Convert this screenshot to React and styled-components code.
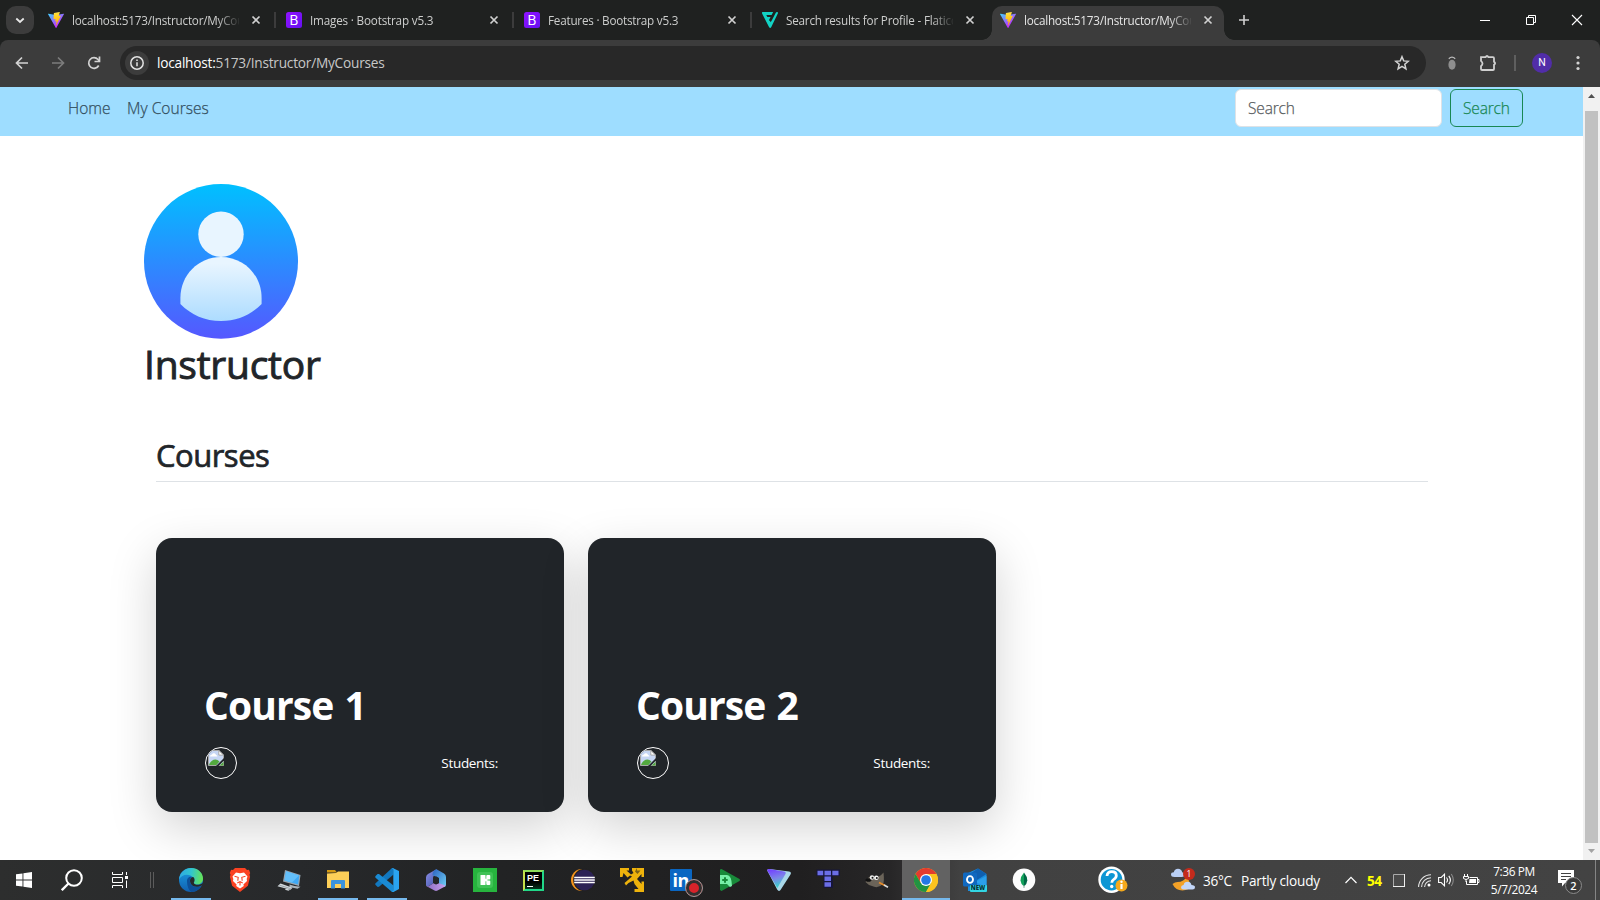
import React from "react";
import styled, { createGlobalStyle } from "styled-components";

const Global = createGlobalStyle`
  * { box-sizing: border-box; }
  body { margin: 0; overflow: hidden; background: #fff; }
  svg { display: block; flex: none; }
`;

const Screen = styled.div`
  width: 1600px;
  height: 900px;
  display: flex;
  flex-direction: column;
  overflow: hidden;
  font-family: "Open Sans", "Noto Sans", sans-serif;
`;

const Label = styled.span`
  font-size: ${(p) => p.$size}px;
  font-weight: ${(p) => p.$weight || 400};
  letter-spacing: ${(p) => p.$track || 0}px;
  color: ${(p) => p.$color || "inherit"};
  white-space: nowrap;
`;

/* ---------- browser chrome ---------- */

const TabStrip = styled.div`
  height: 40px;
  flex: none;
  display: flex;
  background: #1f2120;
`;

const TabSearch = styled.div`
  width: 28px;
  height: 28px;
  margin: 6px 6px 0;
  border-radius: 10px;
  background: #3c3c3c;
  display: flex;
  align-items: center;
  justify-content: center;
`;

const Tab = styled.div`
  position: relative;
  width: ${(p) => (p.$active ? 232 : 238)}px;
  height: 34px;
  margin-top: 6px;
  padding: 0 0 6px 8px;
  display: flex;
  align-items: center;
  color: ${(p) => (p.$active ? "#e6e6e6" : "#cdcecd")};
  background: ${(p) => (p.$active ? "#3c3c3c" : "transparent")};
  border-radius: 10px 10px 0 0;
  ${(p) =>
    p.$active &&
    `&::before, &::after {
      content: "";
      position: absolute;
      bottom: 0;
      width: 10px;
      height: 10px;
    }
    &::before { left: -10px; background: radial-gradient(circle at 0 0, transparent 9.5px, #3c3c3c 10px); }
    &::after { right: -10px; background: radial-gradient(circle at 100% 0, transparent 9.5px, #3c3c3c 10px); }`}
`;

const TabTitle = styled.div`
  width: 167px;
  margin: 0 9px 0 8px;
  overflow: hidden;
  font-size: 11.7px;
  line-height: 20px;
  letter-spacing: ${(p) => p.$track}px;
  white-space: nowrap;
  mask-image: linear-gradient(to right, #000 145px, transparent 169px);
`;

const TabDivider = styled.div`
  width: 2px;
  height: 16px;
  margin-left: 10px;
  background: #3c3c3c;
`;

const NewTab = styled.div`
  margin: 14px 0 0 14px;
`;

const WindowButtons = styled.div`
  margin-left: auto;
  height: 40px;
  display: flex;
  align-items: center;
`;

const WindowButton = styled.div`
  width: 46px;
  display: flex;
  justify-content: center;
`;

const ToolbarBack = styled.div`
  height: 47px;
  flex: none;
  background: #1f2120;
`;

const Toolbar = styled.div`
  height: 47px;
  padding: 0 14px 1px 14px;
  display: flex;
  align-items: center;
  background: #3c3c3c;
  border-radius: 8px 8px 0 0;
`;

const NavButtons = styled.div`
  width: 106px;
  display: flex;
  gap: 20px;
`;

const Omnibox = styled.div`
  width: 1306px;
  height: 34px;
  padding: 0 16px 0 5px;
  display: flex;
  align-items: center;
  border-radius: 17px;
  background: #282828;
`;

const SiteInfo = styled.div`
  width: 24px;
  height: 24px;
  margin-right: 8px;
  border-radius: 50%;
  background: #3c3c3c;
  display: flex;
  align-items: center;
  justify-content: center;
`;

const Url = styled.div`
  flex: 1;
  font-size: 13.7px;
  line-height: 20px;
  letter-spacing: -0.24px;
  color: #c7c7c7;
  b { font-weight: 400; color: #fff; }
`;

const ToolbarRight = styled.div`
  flex: 1;
  display: flex;
  align-items: center;
  justify-content: flex-end;
`;

const ToolbarDivider = styled.div`
  width: 2px;
  height: 16px;
  margin: 0 16px 0 17px;
  background: #5f5f5f;
`;

const Profile = styled.div`
  width: 20px;
  height: 20px;
  margin-right: 18px;
  border-radius: 50%;
  background: #512da8;
  color: #fff;
  font: 400 10.5px/20px Roboto, sans-serif;
  text-align: center;
`;

/* ---------- web page ---------- */

const Viewport = styled.div`
  height: 773px;
  flex: none;
  display: flex;
`;

const Page = styled.div`
  width: 1583px;
  overflow: hidden;
  background: #fff;
  color: #212529;
`;

const Navbar = styled.nav`
  height: 49px;
  padding: 2px 60px 0 68px;
  display: flex;
  align-items: flex-start;
  background: #9eddff;
`;

const NavLink = styled.a`
  width: ${(p) => p.$width}px;
  margin-right: 16px;
  font-size: 15.5px;
  font-weight: 300;
  letter-spacing: ${(p) => p.$track}px;
  line-height: 39px;
  color: #34505f;
  -webkit-text-stroke: 0.25px currentColor;
  white-space: nowrap;
`;

const SearchForm = styled.div`
  margin-left: auto;
  display: flex;
  gap: 8px;
`;

const Field = styled.div`
  width: ${(p) => (p.$button ? 73 : 207)}px;
  height: 38px;
  padding-left: 12px;
  border: 1px solid ${(p) => (p.$button ? "#198754" : "#dee2e6")};
  border-radius: 6px;
  background: ${(p) => (p.$button ? "transparent" : "#fff")};
  color: ${(p) => (p.$button ? "#198754" : "#595d61")};
  font-size: 15.5px;
  font-weight: 300;
  letter-spacing: -0.15px;
  line-height: 37px;
  -webkit-text-stroke: 0.25px currentColor;
`;

const Content = styled.main`
  padding: 48px 155px 0 144px;
`;

const Name = styled.h1`
  margin: 1px 0 0;
  height: 48px;
  font-size: 39px;
  font-weight: 400;
  line-height: 48px;
  letter-spacing: -0.25px;
  -webkit-text-stroke: 0.9px currentColor;
`;

const SectionTitle = styled.h2`
  margin: 42px 0 0 12px;
  height: 52px;
  border-bottom: 1px solid #dee2e6;
  font-size: 31px;
  font-weight: 400;
  line-height: 50px;
  letter-spacing: -0.5px;
  -webkit-text-stroke: 0.7px currentColor;
`;

const Cards = styled.div`
  margin: 56px 0 0 12px;
  display: flex;
  gap: 24px;
`;

const Card = styled.article`
  width: 408px;
  height: 274px;
  padding: 0 65px 33px 49px;
  display: flex;
  flex-direction: column;
  justify-content: flex-end;
  border-radius: 16px;
  background: #212529;
  box-shadow: 0 16px 48px rgba(0, 0, 0, 0.175);
  color: #fff;
`;

const CardTitle = styled.h2`
  margin: 0 0 18px -1px;
  font-size: 39px;
  font-weight: 700;
  line-height: 48px;
  letter-spacing: -0.9px;
  word-spacing: 2px;
  white-space: nowrap;
`;

const CardFooter = styled.div`
  display: flex;
  align-items: center;
  justify-content: space-between;
`;

const Thumb = styled.div`
  width: 32px;
  height: 32px;
  padding: 2px;
  border: 1px solid #fff;
  border-radius: 50%;
  overflow: hidden;
`;

const Students = styled.span`
  margin-right: 1px;
  font-size: 13.5px;
  letter-spacing: -0.3px;
`;

const Scrollbar = styled.div`
  width: 17px;
  padding: 7px 2px 6px;
  display: flex;
  flex-direction: column;
  align-items: center;
  background: #f1f1f1;
`;

const ScrollThumb = styled.div`
  width: 13px;
  height: 732px;
  margin: 13px 0 6px;
  background: #c1c1c1;
`;

/* ---------- taskbar ---------- */

const Taskbar = styled.footer`
  height: 40px;
  flex: none;
  display: flex;
  background: linear-gradient(to right, #2d2e2e 0, #27292b 300px, #222324 500px, #201f20 800px, #272627 890px, #414141 960px, #434343 1600px);
`;

const TaskItem = styled.div`
  width: ${(p) => p.$width || 49}px;
  height: 40px;
  display: flex;
  align-items: center;
  justify-content: center;
`;

const TaskButton = styled.div`
  width: ${(p) => (p.$active ? 48 : 40)}px;
  height: 40px;
  display: flex;
  align-items: center;
  justify-content: center;
  background: ${(p) => (p.$active ? "#626262" : "transparent")};
  border-bottom: 2px solid ${(p) => (p.$open ? "#76b9ed" : "transparent")};
  border-top: 2px solid transparent;
`;

const Tray = styled.div`
  flex: 1;
  display: flex;
  align-items: center;
  color: #fff;
`;

const TrayItem = styled.div`
  width: ${(p) => p.$width}px;
  margin-left: ${(p) => p.$left || 0}px;
  white-space: nowrap;
  display: flex;
`;

const Clock = styled.div`
  width: 64px;
  margin-left: 1px;
  text-align: center;
  line-height: 18px;
  font-size: 11.9px;
  letter-spacing: -0.4px;
`;

const ShowDesktop = styled.div`
  width: 1px;
  height: 40px;
  margin-left: auto;
  margin-right: 4px;
  background: #858585;
`;

/* ---------- icons ---------- */

const Cross = ({ size = 16, color = "#d0d0d0", r = 3.5, w = 1.7 }) => (
  <svg width={size} height={size} viewBox="0 0 16 16">
    <path d={`M${8 - r} ${8 - r}L${8 + r} ${8 + r}M${8 + r} ${8 - r}L${8 - r} ${8 + r}`} stroke={color} strokeWidth={w} />
  </svg>
);

const ViteIcon = () => (
  <svg width="16" height="16" viewBox="0 0 256 257">
    <defs>
      <linearGradient id="va" x1="0" x2="0.6" y1="0" y2="0.8">
        <stop offset="0" stopColor="#41d1ff" />
        <stop offset="1" stopColor="#bd34fe" />
      </linearGradient>
      <linearGradient id="vb" x1="0.4" x2="0.5" y1="0" y2="1">
        <stop offset="0" stopColor="#ffea83" />
        <stop offset="0.1" stopColor="#ffdd35" />
        <stop offset="1" stopColor="#ffa800" />
      </linearGradient>
    </defs>
    <path fill="url(#va)" d="M255.153 37.938L134.897 252.976c-2.483 4.44-8.862 4.466-11.382.048L.875 37.958c-2.746-4.814 1.371-10.646 6.827-9.67l120.385 21.517a6.537 6.537 0 0 0 2.322-.004l117.867-21.483c5.438-.991 9.574 4.796 6.877 9.62Z" />
    <path fill="url(#vb)" d="M185.432.063L96.44 17.501a3.268 3.268 0 0 0-2.634 3.014l-5.474 92.456a3.268 3.268 0 0 0 3.997 3.378l24.777-5.718c2.318-.535 4.413 1.507 3.936 3.838l-7.361 36.047c-.495 2.426 1.782 4.5 4.151 3.78l15.304-4.649c2.372-.72 4.652 1.36 4.15 3.788l-11.698 56.621c-.732 3.542 3.979 5.473 5.943 2.437l1.313-2.028l72.516-144.72c1.215-2.423-.88-5.186-3.54-4.672l-25.505 4.922c-2.396.462-4.435-1.77-3.759-4.114l16.646-57.705c.677-2.35-1.37-4.583-3.769-4.113Z" />
  </svg>
);

const BootBox = styled.div`
  width: 16px;
  height: 16px;
  border-radius: 2.5px;
  background: linear-gradient(135deg, #9012ff, #6610f2);
  color: #fff;
  font: 400 13.5px/16px Inter, sans-serif;
  text-align: center;
`;

const FlaticonIcon = () => (
  <svg width="16" height="16" viewBox="0 0 16 16" fill="#12d3c4">
    <path d="M.4 0h10.800L9.600 3H4.300l1.100 2H8.600L7.200 7.600l1.500 2.700L10 8 13.800.700Q14.200 0 15 0q1.500.1.800 1.600L9.300 14.900q-1.100 2-2.300 0L.2 1.800Q-.4.500.4 0Z" />
    <path d="M12.300 0L7.600 9" stroke="#1f2120" strokeWidth=".9" />
  </svg>
);

const favicons = { vite: <ViteIcon />, boot: <BootBox>B</BootBox>, flat: <FlaticonIcon /> };

const Avatar = () => (
  <svg width="155" height="155" viewBox="0 0 155 155">
    <defs>
      <linearGradient id="aa" x1="0" x2="0" y1="0" y2="1">
        <stop offset="0" stopColor="#00c0ff" />
        <stop offset="1" stopColor="#5558ff" />
      </linearGradient>
      <linearGradient id="ab" x1="0" x2="0" y1="0" y2="1">
        <stop offset="0.1" stopColor="#e8f5ff" />
        <stop offset="1" stopColor="#addcff" />
      </linearGradient>
    </defs>
    <ellipse cx="77" cy="77.4" rx="77" ry="77.4" fill="url(#aa)" />
    <circle cx="77" cy="50.2" r="22.7" fill="#e8f5ff" />
    <path d="M77 73c-22.700 0-40.600 18-40.600 41v6c11 11 24.600 17 40.600 17s29.600-6 40.600-17v-6c0-23-17.900-41-40.600-41Z" fill="url(#ab)" />
  </svg>
);

const BrokenImage = () => (
  <svg width="16" height="16" viewBox="0 0 16 16">
    <path d="M.5.5h10.3l4.7 4.6v10.4H.5Z" fill="#c6d6f4" stroke="#a8a8a8" />
    <path d="M2 6.5Q2 4.6 4 4.6q.7-1.8 2.4-1.3Q8 3.8 8 5q1.5.1 1.4 1.5Z" fill="#fff" />
    <path d="M1 15q2-5.5 6.5-5.5 2 0 4 2L8.5 15Z" fill="#53a93f" />
    <path d="M16 8v2.500L10.500 16H8Z" fill="#212529" />
    <path d="M11.5 15.500l4-3.700v3.700Z" fill="#53a93f" />
    <path d="M10.8.5v4.600h4.700Z" fill="#fff" stroke="#a8a8a8" />
  </svg>
);

const Task24 = ({ children, size = 24 }) => (
  <svg width={size} height={size} viewBox="0 0 24 24">
    {children}
  </svg>
);

const Edge = () => (
  <Task24>
    <defs>
      <linearGradient id="ea" x1="0" x2="1" y1=".3" y2=".4">
        <stop offset="0" stopColor="#2fa9e5" />
        <stop offset=".5" stopColor="#31c5cf" />
        <stop offset="1" stopColor="#66e455" />
      </linearGradient>
      <linearGradient id="eb" x1="0" x2="0" y1="0" y2="1">
        <stop offset="0" stopColor="#1b9de2" />
        <stop offset="1" stopColor="#1160b0" />
      </linearGradient>
    </defs>
    <circle cx="12" cy="12" r="12" fill="url(#eb)" />
    <path d="M0 11.5C.6 4.500 6 0 12.200 0 19 0 24 5 24 10.500c0 4-3 6-6.200 6-2.500 0-4-1-3.700-1.900 1.600-1.500 1.200-5.600-2.600-7.200C7.500 5.800 2 7 0 11.500Z" fill="url(#ea)" />
    <path d="M8 14c-.3-4 2.200-5.400 4.500-5.100-3 2.300-2.200 9.600 4.500 10.100 2.500.2 4.500-.8 5.500-1.300-2 3.800-5.800 6.300-10.200 6.300C9.500 22 8.200 18 8 14Z" fill="#0d4f98" />
    <path d="M14.800 14.500c1.200-1.600 1.100-4-.5-5.600-2 .2-3.300 1.300-3.300 3.900 0 3 2.700 6 6.500 6 2.400 0 4.200-.7 6-1.800l.5-2c-3 2.500-9 2.500-9.200-.5Z" fill="#25282a" />
  </Task24>
);

const Brave = () => (
  <Task24>
    <path d="M7 0h10l2 2 2-.3L22.200 5l-.7 1.700.6 2-2.200 9L12 24l-7.900-6.300-2.200-9 .6-2L1.800 5 3 1.700 5 2Z" fill="#fb4222" />
    <path d="M8 4.500l4 .8 4-.8 3.500 4-.8 2.500.3 2-3.600 3.500.4 1.500L12 20.500 8.200 18l.4-1.500L5 13l.3-2-.8-2.500Z" fill="#fff" />
    <path d="M6.500 8.300l3.700 1-.4 3.500M17.500 8.300l-3.700 1 .4 3.500M9.300 15l2.700-1.400 2.700 1.400M12 14v3.500" stroke="#fb4222" strokeWidth="1.100" fill="none" />
  </Task24>
);

const Computer = () => (
  <Task24>
    <path d="M8 2l15.500 5-1.500 11L6 13.500Z" fill="#9aa7b2" />
    <path d="M9 3.200l13.300 4.400-1.200 8.800L7.500 12.500Z" fill="#3fa9f5" />
    <path d="M9 3.200L22 7.600l-7 7-7.500-2.100Z" fill="#63bffa" />
    <path d="M12.500 16.500l5 1.500 6 .8-3 2-8-1.800Z" fill="#aab4bc" />
    <path d="M3.500 15.500l12 4.200-2 2-13-3.500Z" fill="#d4dade" />
    <path d="M2.300 17.200l11.500 3.500" stroke="#8b959d" strokeWidth=".8" />
    <path d="M9 20.500l4 1.200-1.500 1-3.500-1Z" fill="#cfd6da" />
  </Task24>
);

const Explorer = () => (
  <Task24>
    <path d="M1 2h8l2 2.500H1Z" fill="#d69a12" />
    <path d="M1 5.500L10 5l2-1.500h11V20H1Z" fill="#fdcf58" />
    <path d="M5 20.500V13q0-1 1-1h12q1 0 1 1v7.500h-4V16H9v4.500Z" fill="#3a93dc" />
  </Task24>
);

const VsCode = () => (
  <Task24>
    <path d="M17 0l1.500.3v6.200L4 18.800l-1.300.1L.3 16.800v-1.200Z" fill="#1278bf" />
    <path d="M.3 8.300L2.600 6l1.400.1 14.500 11.500V24H17L.3 9.600Z" fill="#1a8bd4" />
    <path d="M17 0l1.200.2L24 3v18l-5.500 3-1.500-.2 1.300-1.300V1.500Z" fill="#2aa4f1" />
  </Task24>
);

const M365 = () => (
  <Task24>
    <defs>
      <linearGradient id="ma" x1="0" x2="1" y1="0" y2="1">
        <stop offset="0" stopColor="#8f8fe8" />
        <stop offset="1" stopColor="#3c55a8" />
      </linearGradient>
      <linearGradient id="mb" x1="0" x2="1" y1="0" y2="1">
        <stop offset="0" stopColor="#2c62c0" />
        <stop offset="1" stopColor="#6fd0f5" />
      </linearGradient>
      <linearGradient id="mc" x1="0" x2="1" y1="0" y2="0">
        <stop offset="0" stopColor="#8a6cc4" />
        <stop offset="1" stopColor="#c9a0ec" />
      </linearGradient>
    </defs>
    <path d="M12.500 1.200L4 6Q2 7.200 2 9.500v7.500q0 1.500 2 1.500l5-3V10q0-2 2-3l3-2Z" fill="url(#ma)" />
    <path d="M12.500 1.200L20 5.500q2 1.200 2 3.500v7.500q0 2-1.500 2.500L15 15.700V10.500L8.500 7q0-4.500 4-5.800Z" fill="url(#mb)" />
    <path d="M2.200 16.500Q3 19 5 18l4.500-2.700 2.500 1.200 3-1.300 6.500 2.300-1 1.200-7 3.800q-1.500.8-3 0L4 19Q2.200 18 2.200 16.500Z" fill="url(#mc)" />
    <path d="M9 10l3-1.700 3 1.700v4.500l-3 1.700-3-1.700Z" fill="#242629" />
  </Task24>
);

const GreenApp = () => (
  <Task24>
    <path d="M0 0h24v24H0Z" fill="#27b43e" />
    <rect x="4" y="4" width="16" height="16" rx="3" fill="#3fc255" />
    <rect x="7.500" y="7" width="5" height="10" rx=".6" fill="#fff" />
    <rect x="13.300" y="7" width="4" height="4.400" rx="1" fill="#fff" />
    <rect x="13.300" y="12.600" width="4" height="4.400" rx="1" fill="#fff" />
    <path d="M12 10.700h2.500v2.600H12Z" fill="#fff" />
  </Task24>
);

const PyCharmBox = styled.div`
  width: 21px;
  height: 21px;
  border: 2px solid #21d789;
  border-top-color: #8fdc5a;
  border-left-color: #c5e04a;
  background: linear-gradient(#000, #000 60%, #06331f);
  color: #fff;
  font: 700 9px/10px "Liberation Sans", sans-serif;
  padding: 1px 0 0 2px;
  &::after {
    content: "";
    display: block;
    width: 6px;
    height: 1px;
    margin-top: 3px;
    background: #fff;
  }
`;

const Eclipse = () => (
  <Task24>
    <circle cx="11" cy="12" r="11" fill="#f7941e" />
    <circle cx="13.500" cy="12" r="11.300" fill="#222122" />
    <circle cx="13.500" cy="12" r="10.300" fill="#2c2255" />
    <path d="M3.200 9.500h20.600M3.200 12h20.600M3.200 14.500h20.600" stroke="#fff" strokeWidth="1.300" />
  </Task24>
);

const Arrows = () => (
  <Task24>
    <path d="M0 0h9v2.500H6.500L11 6.500 13.500 5 12 2.500V0h12v9h-2.500V6L17 11l4.500 5V13.500H24V24h-9.500v-3h4L14.500 16l-1-3.500-5 2.500L6 17.500 4.500 15 8 12l4-3.500-2-1L7.500 9.500 3.500 5 2.500 9H0Z" fill="#eeb30c" />
    <path d="M17 0v2.500h3.500L17.500 6 15 3.500Z" fill="#212021" opacity=".55" />
  </Task24>
);

const LinkedInWrap = styled.div`
  position: relative;
  width: 22px;
  height: 22px;
  border-radius: 1px;
  background: #0a66c2;
  color: #fff;
  font: 700 18px/22px "Open Sans", sans-serif;
  letter-spacing: -0.5px;
  padding-left: 3px;
`;

const RecordBadge = styled.div`
  position: absolute;
  left: 15px;
  top: 10px;
  width: 18px;
  height: 18px;
  border: 1px solid #999;
  border-radius: 50%;
  background: #d8232a;
  box-shadow: inset 0 0 0 3px #303030;
`;

const PlayGames = () => (
  <Task24>
    <path d="M2 1.500L3.500.9 21.500 11q1 1 0 2L3.500 23l-1.500-.9Z" fill="#188a3a" />
    <path d="M2 7h7q4.500 0 5 11l-2 1-3-3H2Z" fill="#77f0a8" />
    <path d="M4.200 12h5.500M7 9.300v5.400" stroke="#188a3a" strokeWidth="2" />
  </Task24>
);

const Proton = () => (
  <Task24>
    <defs>
      <linearGradient id="pa" x1=".3" x2=".6" y1="0" y2="1">
        <stop offset="0" stopColor="#7341ff" />
        <stop offset=".5" stopColor="#7d86e8" />
        <stop offset="1" stopColor="#2edcc8" />
      </linearGradient>
    </defs>
    <path d="M.2 2.500Q.5.9 2.200 1.100L22 3.400q2.800.5 1.500 3L13.500 22q-1.700 2-3.200-.2Z" fill="#a9d7e8" />
    <path d="M.2 2.500Q.5.9 2.200 1.100L17 3.500q2.500.5 1.500 2.500L10.300 20Z" fill="url(#pa)" />
  </Task24>
);

const Tetris = () => (
  <Task24>
    <path d="M.5 1.500h23.500V8h-7v12H7.500V8h-7Z" fill="#17163a" />
    <path d="M1.500 2.700h5.700v4.500H1.500ZM8.500 2.700h6.500v4.500H8.500ZM16.300 2.700h6.200v4.500h-6.200ZM8.500 8.500h6.500v4.500H8.500ZM8.500 14.300h6.500v4.500H8.500Z" fill="#6b6ee6" />
  </Task24>
);

const Gimp = () => (
  <Task24>
    <path d="M4 9q3-2 5 0 5 1 9.500-4.500Q19.500 14 18 16q-5 5-11 2-4-1-6.500-4Z" fill="#6b6459" />
    <ellipse cx="3.500" cy="12" rx="3" ry="1.800" fill="#111" />
    <circle cx="7" cy="9.500" r="2.200" fill="#eee" />
    <circle cx="11.300" cy="9.800" r="2.300" fill="#f5f5f5" />
    <circle cx="7.500" cy="9.700" r="1" fill="#111" />
    <circle cx="11.800" cy="10" r="1" fill="#111" />
    <path d="M14 14.500l6 3" stroke="#e58a2b" strokeWidth="1.800" />
    <path d="M19 17l4 2.300" stroke="#ddd" strokeWidth="1.600" />
  </Task24>
);

const Chrome = () => (
  <Task24>
    <circle cx="12" cy="12" r="12" fill="#fcc31e" />
    <path d="M1.600 6A12 12 0 0 1 22.400 6H12L6.800 15Z" fill="#e33b2e" />
    <path d="M1.600 6A12 12 0 0 0 12 24l5.200-9L12 12 6.800 15Z" fill="#229342" />
    <path d="M12 24l5.200-9V6h5.200A12 12 0 0 1 12 24Z" fill="#fcc31e" />
    <circle cx="12" cy="12" r="6" fill="#fff" />
    <circle cx="12" cy="12" r="4.800" fill="#2478e5" />
  </Task24>
);

const OutlookWrap = styled.div`
  position: relative;
  width: 24px;
  height: 24px;
`;

const NewBadge = styled.div`
  position: absolute;
  left: 7px;
  top: 17px;
  width: 17px;
  height: 7px;
  border-radius: 1px;
  background: #33d5e3;
  color: #06323a;
  font: 800 6px/7px "Open Sans", sans-serif;
  text-align: center;
`;

const Outlook = () => (
  <OutlookWrap>
    <Task24>
      <path d="M5 5L15 .6 23.500 6v17H5Z" fill="#1a8ee0" />
      <path d="M15 .6L23.500 6 14 12 5 7Z" fill="#0f5fb0" />
      <path d="M23.500 8v11L12 14Z" fill="#2ba0ec" />
      <rect y="4.500" width="14" height="14" rx="1.500" fill="#1068bf" />
      <ellipse cx="7" cy="11.500" rx="3" ry="3.400" fill="none" stroke="#fff" strokeWidth="1.900" />
    </Task24>
    <NewBadge>NEW</NewBadge>
  </OutlookWrap>
);

const Mongo = () => (
  <Task24>
    <circle cx="12" cy="11.700" r="11.300" fill="#fcfcfc" />
    <path d="M12 4.500Q8.500 8.500 8.500 12.500q.3 3.500 3.500 6Z" fill="#12a05a" />
    <path d="M12 4.500Q15.300 8.500 15.300 12.500q-.3 3.500-3.300 6Z" fill="#006845" />
    <path d="M12 17v3" stroke="#8aa99c" />
  </Task24>
);

const Help = () => (
  <svg width="30" height="28" viewBox="0 0 30 28">
    <circle cx="13.500" cy="13.700" r="13.200" fill="#fff" />
    <circle cx="13.500" cy="13.700" r="10.800" fill="#0c96d4" />
    <path d="M9 10q.3-4.300 4.800-4.300 4.500 0 4.500 3.900 0 2.400-2.500 3.800-2 1.200-2 3.400" fill="none" stroke="#fff" strokeWidth="2.800" />
    <circle cx="13.700" cy="20.500" r="1.700" fill="#fff" />
    <circle cx="23.500" cy="19.500" r="6" fill="#f5a91c" />
    <path d="M23.500 18v5" stroke="#fff" strokeWidth="2.200" />
    <circle cx="23.500" cy="15.800" r="1.200" fill="#fff" />
  </svg>
);

const WeatherWrap = styled.div`
  position: relative;
`;

const Alert = styled.div`
  position: absolute;
  left: 12px;
  top: 0;
  width: 12px;
  height: 12px;
  border-radius: 50%;
  background: #c42b1c;
  color: #fff;
  font: 400 8.5px/12px "Open Sans", sans-serif;
  text-align: center;
`;

const Weather = () => (
  <WeatherWrap>
    <Task24>
      <path d="M16 8q-3 6-9.500 6-2.500 0-5 2 3 6.500 10 6.500Q18 22 20 18Z" fill="#f3a127" />
      <path d="M3.500 9Q0 9 0 6.500 0 4.300 2.800 4.200 3.500 1 7 .8q3.500.1 4.200 3.500 2.300.2 2.300 2.500Q13.400 9 11 9Z" fill="#b9cff5" />
      <path d="M12.500 21.500q-2.500-.1-2.500-2.300 0-2.200 2.600-2.300.6-3 4-3.100 3.100.1 3.900 3.100 3.500.1 3.500 2.300 0 2.200-2.500 2.300Z" fill="#c3d6f8" />
    </Task24>
    <Alert>1</Alert>
  </WeatherWrap>
);

const NoticeWrap = styled.div`
  position: relative;
  width: 24px;
  height: 20px;
`;

const NoticeCount = styled.div`
  position: absolute;
  left: 7px;
  top: 7px;
  width: 17px;
  height: 17px;
  border: 1px solid #8b8b8b;
  border-radius: 50%;
  background: #3a3a3a;
  color: #fff;
  font: 600 11px/15px "Open Sans", sans-serif;
  text-align: center;
`;

/* ---------- data ---------- */

const tabs = [
  { icon: "vite", title: "localhost:5173/Instructor/MyCourses", track: -0.22 },
  { icon: "boot", title: "Images · Bootstrap v5.3", track: -0.18 },
  { icon: "boot", title: "Features · Bootstrap v5.3", track: -0.22 },
  { icon: "flat", title: "Search results for Profile - Flaticon", track: -0.2 },
  { icon: "vite", title: "localhost:5173/Instructor/MyCourses", track: -0.22, active: true },
];

const apps = [
  { icon: <Edge />, open: true },
  { icon: <Brave /> },
  { icon: <Computer /> },
  { icon: <Explorer />, open: true },
  { icon: <VsCode />, open: true },
  { icon: <M365 /> },
  { icon: <GreenApp /> },
  { icon: <PyCharmBox>PE</PyCharmBox> },
  { icon: <Eclipse /> },
  { icon: <Arrows /> },
  { icon: <LinkedInWrap>in<RecordBadge /></LinkedInWrap> },
  { icon: <PlayGames /> },
  { icon: <Proton /> },
  { icon: <Tetris /> },
  { icon: <Gimp /> },
  { icon: <Chrome />, open: true, active: true },
  { icon: <Outlook /> },
  { icon: <Mongo /> },
];

export default function App() {
  return (
    <Screen>
      <Global />
      <TabStrip>
        <TabSearch>
          <svg width="10" height="10" viewBox="0 0 10 10">
            <path d="M1.3 3.500L5 7l3.700-3.500" fill="none" stroke="#e8e8e8" strokeWidth="1.800" />
          </svg>
        </TabSearch>
        {tabs.map((t, i) => (
          <Tab key={i} $active={t.active}>
            {favicons[t.icon]}
            <TabTitle $track={t.track}>{t.title}</TabTitle>
            <Cross />
            {i < 3 && <TabDivider />}
          </Tab>
        ))}
        <NewTab>
          <svg width="12" height="12" viewBox="0 0 12 12">
            <path d="M6 1v10M1 6h10" stroke="#d0d0d0" strokeWidth="1.600" />
          </svg>
        </NewTab>
        <WindowButtons>
          <WindowButton>
            <svg width="10" height="10"><path d="M0 5.500h10" stroke="#fff" /></svg>
          </WindowButton>
          <WindowButton>
            <svg width="10" height="10" fill="none" stroke="#fff"><path d="M.5 2.500h7v7h-7ZM2.500 2.500v-2h7v7h-2" /></svg>
          </WindowButton>
          <WindowButton>
            <Cross color="#fff" r={5} w={1.1} />
          </WindowButton>
        </WindowButtons>
      </TabStrip>
      <ToolbarBack>
        <Toolbar>
          <NavButtons>
            <svg width="16" height="16" viewBox="0 0 16 16" fill="none" stroke="#d3d3d3" strokeWidth="1.700"><path d="M14 8H3M8 2.500L2.500 8 8 13.500" /></svg>
            <svg width="16" height="16" viewBox="0 0 16 16" fill="none" stroke="#7c7c7c" strokeWidth="1.700"><path d="M2 8h11M8 2.500L13.500 8 8 13.500" /></svg>
            <svg width="16" height="16" viewBox="0 0 16 16" fill="none" stroke="#d3d3d3" strokeWidth="1.700"><path d="M12.700 10.500A5.300 5.300 0 1 1 12 4.500L13.500 6M13.500 1.500v5H8.500" /></svg>
          </NavButtons>
          <Omnibox>
            <SiteInfo>
              <svg width="16" height="16" viewBox="0 0 16 16"><circle cx="8" cy="8" r="6.200" fill="none" stroke="#e3e3e3" strokeWidth="1.500" /><path d="M8 7.200v4M8 4.500v1.500" stroke="#e3e3e3" strokeWidth="1.500" /></svg>
            </SiteInfo>
            <Url><b>localhost:</b>5173/Instructor/MyCourses</Url>
            <svg width="16" height="16" viewBox="0 0 16 16"><path d="M8 1.700l1.700 4.200 4.600.4-3.500 3 1.100 4.500L8 11.400l-3.900 2.400 1.100-4.500-3.500-3 4.600-.4Z" fill="none" stroke="#d3d3d3" strokeWidth="1.500" /></svg>
          </Omnibox>
          <ToolbarRight>
            <TrayItem $width={31}>
              <svg width="8" height="14" viewBox="0 0 8 14"><ellipse cx="4" cy="8.800" rx="3.600" ry="5" fill="#8e8e8e" /><path d="M.8 2.800Q4-.6 7.200 2.800" fill="none" stroke="#bbb" strokeWidth="1.300" /></svg>
            </TrayItem>
            <svg width="18" height="18" viewBox="0 0 18 18"><path d="M2 3.200h4.500q1.500-2.400 3 0H14q1 0 1 1v3.500q2.200 1.500 0 3v4.300q0 1-1 1H3q-1 0-1-1v-2.800q3-2.700 0-5.400Z" fill="none" stroke="#d0d0d0" strokeWidth="1.800" /></svg>
            <ToolbarDivider />
            <Profile>N</Profile>
            <svg width="16" height="16" viewBox="0 0 16 16" fill="#d3d3d3"><circle cx="8" cy="2.500" r="1.600" /><circle cx="8" cy="8" r="1.600" /><circle cx="8" cy="13.500" r="1.600" /></svg>
          </ToolbarRight>
        </Toolbar>
      </ToolbarBack>

      <Viewport>
        <Page>
          <Navbar>
            <NavLink $width={43} $track={0.05}>Home</NavLink>
            <NavLink $width={83} $track={0.05}>My Courses</NavLink>
            <SearchForm>
              <Field>Search</Field>
              <Field $button>Search</Field>
            </SearchForm>
          </Navbar>
          <Content>
            <Avatar />
            <Name>Instructor</Name>
            <SectionTitle>Courses</SectionTitle>
            <Cards>
              {[1, 2].map((n) => (
                <Card key={n}>
                  <CardTitle>Course {n}</CardTitle>
                  <CardFooter>
                    <Thumb><BrokenImage /></Thumb>
                    <Students>Students:</Students>
                  </CardFooter>
                </Card>
              ))}
            </Cards>
          </Content>
        </Page>
        <Scrollbar>
          <svg width="7" height="4"><path d="M0 4L3.500 0 7 4Z" fill="#505050" /></svg>
          <ScrollThumb />
          <svg width="7" height="4"><path d="M0 0L3.500 4 7 0Z" fill="#a3a3a3" /></svg>
        </Scrollbar>
      </Viewport>

      <Taskbar>
        <TaskItem $width={48}>
          <svg width="16" height="16" viewBox="0 0 16 16" fill="#fff"><path d="M0 2.300L6.500 1.400v6.100H0ZM7.400 1.300L16 0v7.500H7.400ZM0 8.400h6.500v6.200L0 13.700ZM7.400 8.400H16V16l-8.600-1.300Z" /></svg>
        </TaskItem>
        <TaskItem $width={48}>
          <svg width="22" height="22" viewBox="0 0 22 22" fill="none" stroke="#fff" strokeWidth="2"><circle cx="13" cy="9" r="7.800" /><path d="M7.500 14.500L.8 21.200" strokeWidth="2.300" /></svg>
        </TaskItem>
        <TaskItem $width={47}>
          <svg width="16" height="16" viewBox="0 0 16 16" fill="none" stroke="#fff"><path d="M.5 0v2.500h10V0M.5 5.500h10v5H.5ZM.5 16v-2.500h10V16M14.500 0v3M14.500 8.500V16" /><path d="M13 4h3v3h-3Z" fill="#fff" stroke="none" /></svg>
        </TaskItem>
        <TaskItem $width={18}>
          <svg width="4" height="16"><path d="M.5 0v16M3.500 0v16" stroke="#5c5c5c" /></svg>
        </TaskItem>
        <TaskItem $width={5} />
        {apps.map((a, i) => (
          <TaskItem key={i}>
            <TaskButton $open={a.open} $active={a.active}>{a.icon}</TaskButton>
          </TaskItem>
        ))}
        <Tray>
          <TrayItem $left={50} $width={73}><Help /></TrayItem>
          <TrayItem $width={32}><Weather /></TrayItem>
          <TrayItem $width={38}><Label $size={13.6} $track={-0.3}>36°C</Label></TrayItem>
          <TrayItem $width={104}><Label $size={13.6} $track={-0.2}>Partly cloudy</Label></TrayItem>
          <TrayItem $width={22}>
            <svg width="12" height="8" viewBox="0 0 12 8"><path d="M.5 7L6 1.300 11.500 7" fill="none" stroke="#fff" strokeWidth="1.200" /></svg>
          </TrayItem>
          <TrayItem $width={26}><Label $size={13.6} $weight={700} $track={-0.4} $color="#ff0">54</Label></TrayItem>
          <TrayItem $width={25}>
            <svg width="12" height="13"><path d="M.5.5h11v12H.5Z" fill="#4a4a4a" stroke="#aaa" /><path d="M11.500 0v13M0 12.500h12" stroke="#eee" /></svg>
          </TrayItem>
          <TrayItem $width={20}>
            <svg width="13" height="13" viewBox="0 0 13 13" fill="none" stroke="#e6e6e6" strokeWidth="1.100"><path d="M.6 13A12.400 12.400 0 0 1 13 .7M3.600 13A9.400 9.400 0 0 1 13 3.700M6.600 13A6.400 6.400 0 0 1 13 6.700" /><circle cx="11" cy="11" r="1.500" fill="#fff" stroke="none" /></svg>
          </TrayItem>
          <TrayItem $width={25}>
            <svg width="17" height="14" viewBox="0 0 17 14" fill="none" stroke="#fff" strokeWidth="1.100"><path d="M.6 4.500h2.600L6.500 1.200v11.600L3.200 9.500H.6ZM8.500 4.500q2 2.500 0 5M10.800 2.800q3.200 4.200 0 8.400" /><path d="M13.300 1q4 6 0 12" stroke="#888" /></svg>
          </TrayItem>
          <TrayItem $width={18}>
            <svg width="17" height="12" viewBox="0 0 17 12" fill="none" stroke="#fff"><path d="M6.500 3.500h8v7h-11V7M14.500 5.500h1.500v3h-1.500" /><path d="M6.500 5h6.500v4H6Z" fill="#fff" stroke="none" /><path d="M1.500 0v2M4.500 0v2M.5 2.500h5v2L3 5.500.5 4.500ZM3 5v3" /></svg>
          </TrayItem>
          <Clock>7:36 PM<br />5/7/2024</Clock>
          <TrayItem $left={12} $width={24}>
            <NoticeWrap>
              <svg width="16" height="17" viewBox="0 0 16 17"><path d="M0 0h16v13H7l-3 3.500V13H0Z" fill="#fff" /><path d="M3 3.500h10M3 6.500h10M3 9.500h5" stroke="#424242" /></svg>
              <NoticeCount>2</NoticeCount>
            </NoticeWrap>
          </TrayItem>
          <ShowDesktop />
        </Tray>
      </Taskbar>
    </Screen>
  );
}
